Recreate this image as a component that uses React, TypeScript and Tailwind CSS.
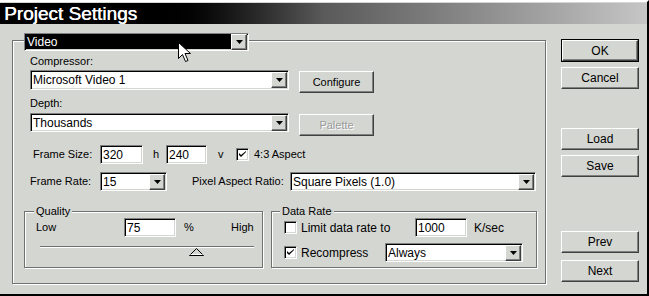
import React from "react";

const sunken =
  "border border-t-[#808080] border-l-[#808080] border-b-white border-r-white shadow-[inset_1px_1px_0_#000,inset_-1px_-1px_0_#d4d6d2]";
const raised =
  "border border-t-white border-l-white border-b-[#404040] border-r-[#404040] shadow-[inset_-1px_-1px_0_#808080]";

function Arrow() {
  return (
    <div className={`flex h-[16px] w-[16px] shrink-0 items-center justify-center bg-[#d4d6d2] ${raised}`}>
      <svg width="7" height="4" viewBox="0 0 7 4">
        <path d="M0 0h7L3.5 4z" fill="#000" />
      </svg>
    </div>
  );
}

function Select({ value, className = "", dark = false }: { value: string; className?: string; dark?: boolean }) {
  return (
    <div
      className={`flex items-center justify-between pl-[2px] pr-[1px] ${dark ? "bg-black text-white" : "bg-white text-black"} ${sunken} ${className}`}
    >
      <span className="leading-none">{value}</span>
      <Arrow />
    </div>
  );
}

function Input({ value, className = "" }: { value: string; className?: string }) {
  return (
    <div className={`flex items-center bg-white pl-[2px] ${sunken} ${className}`}>
      <span className="leading-none">{value}</span>
    </div>
  );
}

function Button({ label, className = "", disabled = false, def = false }: { label: string; className?: string; disabled?: boolean; def?: boolean }) {
  const inner = (
    <div
      className={`flex h-full w-full items-center justify-center ${raised} ${disabled ? "text-[#9a9a9a] [text-shadow:1px_1px_0_#fff]" : "text-black"}`}
    >
      {label}
    </div>
  );
  if (def) {
    return <div className={`border border-black ${className}`}>{inner}</div>;
  }
  return <div className={className}>{inner}</div>;
}

function Check({ checked }: { checked: boolean }) {
  return (
    <div className={`flex h-[13px] w-[13px] shrink-0 items-center justify-center bg-white ${sunken}`}>
      {checked && (
        <svg width="7" height="7" viewBox="0 0 7 7">
          <path d="M0 2v2l2 2 5-5V0L2 4z" fill="#000" />
        </svg>
      )}
    </div>
  );
}

const etched = "border border-[#707070] shadow-[1px_1px_0_#fff,inset_1px_1px_0_#fff]";

export default function App() {
  return (
    <div className="relative h-[296px] w-[649px] overflow-hidden border-t-2 border-r-2 border-b-2 border-t-white border-r-black border-b-black bg-[#d4d6d2] font-['Liberation_Sans',Arial,sans-serif] text-[11px] text-black">
      <div className="mt-px flex h-[21px] items-center bg-gradient-to-r from-black from-[24%] via-[#5a5a5a] via-[50%] to-[#c6c6c6] pl-[4px]">
        <span className="text-[19px] leading-none text-white [text-shadow:0.4px_0_0_#fff]">Project Settings</span>
      </div>

      <div className="flex">
        <div className={`ml-[12px] mt-[16px] h-[244px] w-[534px] ${etched}`}>
          <div className="-mt-[8px] ml-[11px]">
            <Select value="Video" dark className="h-[18px] w-[225px] text-[12px]" />
          </div>

          <div className="pl-[17px]">
            <div className="mt-[4px] h-[12px] leading-[12px]">Compressor:</div>
            <div className="mt-[3px] flex items-start gap-[10px]">
              <Select value="Microsoft Video 1" className="h-[20px] w-[259px] text-[12px]" />
              <Button label="Configure" className="mt-px h-[22px] w-[75px]" />
            </div>

            <div className="mt-[4px] h-[12px] leading-[12px]">Depth:</div>
            <div className="mt-[4px] flex items-start gap-[10px]">
              <Select value="Thousands" className="h-[19px] w-[259px] text-[12px]" />
              <Button label="Palette" disabled className="mt-px h-[22px] w-[75px]" />
            </div>

            <div className="mt-[9px] flex items-center">
              <span className="ml-[3px] w-[67px]">Frame Size:</span>
              <Input value="320" className="h-[19px] w-[43px] text-[12px]" />
              <span className="ml-[10px] w-[13px]">h</span>
              <Input value="240" className="h-[19px] w-[41px] text-[12px]" />
              <span className="ml-[11px] w-[18px]">v</span>
              <Check checked />
              <span className="ml-[5px]">4:3 Aspect</span>
            </div>

            <div className="mt-[8px] flex items-center">
              <span className="w-[70px]">Frame Rate:</span>
              <Select value="15" className="h-[19px] w-[67px] text-[12px]" />
              <span className="ml-[25px] w-[98px]">Pixel Aspect Ratio:</span>
              <Select value="Square Pixels (1.0)" className="h-[19px] w-[246px] text-[12px]" />
            </div>
          </div>

          <div className="mt-[20px] flex gap-[8px] pl-[11px]">
            <div className={`relative h-[57px] w-[239px] ${etched}`}>
              <span className="absolute -top-[8px] left-[9px] bg-[#d4d6d2] px-[2px] leading-[14px]">Quality</span>
              <div className="mt-[6px] flex items-center pl-[11px]">
                <span className="w-[88px]">Low</span>
                <Input value="75" className="h-[19px] w-[52px] text-[12px]" />
                <span className="ml-[8px] w-[47px]">%</span>
                <span>High</span>
              </div>
              <div className="ml-[15px] mt-[9px] h-px w-[214px] bg-[#707070] shadow-[0_1px_0_#fff]" />
              <div className="ml-[164px] mt-[1px]">
                <svg width="15" height="8" viewBox="0 0 15 8">
                  <path d="M7.5 0.5L14.5 7.5H0.5z" fill="#d4d6d2" stroke="#000" strokeWidth="1" />
                  <path d="M1.5 6.5h12" stroke="#fff" />
                </svg>
              </div>
            </div>

            <div className={`relative h-[57px] w-[266px] ${etched}`}>
              <span className="absolute -top-[8px] left-[8px] bg-[#d4d6d2] px-[2px] leading-[14px]">Data Rate</span>
              <div className="mt-[6px] flex items-center pl-[12px]">
                <Check checked={false} />
                <span className="ml-[4px] w-[114px] text-[12px]">Limit data rate to</span>
                <Input value="1000" className="h-[19px] w-[52px] text-[12px]" />
                <span className="ml-[7px] text-[12px]">K/sec</span>
              </div>
              <div className="mt-[6px] flex items-center pl-[12px]">
                <Check checked />
                <span className="ml-[4px] w-[84px] text-[12px]">Recompress</span>
                <Select value="Always" className="h-[19px] w-[138px] text-[12px]" />
              </div>
            </div>
          </div>
        </div>

        <div className="ml-[15px] mt-[15px] flex w-[78px] flex-col text-[12px]">
          <Button label="OK" def className="h-[23px] w-[78px]" />
          <Button label="Cancel" className="mt-[5px] h-[22px] w-[78px]" />
          <Button label="Load" className="mt-[39px] h-[22px] w-[78px]" />
          <Button label="Save" className="mt-[5px] h-[22px] w-[78px]" />
          <Button label="Prev" className="mt-[54px] h-[22px] w-[78px]" />
          <Button label="Next" className="mt-[7px] h-[22px] w-[78px]" />
        </div>
      </div>

      <svg className="absolute left-[178px] top-[40px]" width="14" height="22" viewBox="0 0 14 22">
        <path d="M0.5 0.5V16.5L4.5 12.5L7.5 19.5L10 18.5L7 11.5H12.5Z" fill="#fff" stroke="#000" strokeWidth="1" />
      </svg>
    </div>
  );
}
